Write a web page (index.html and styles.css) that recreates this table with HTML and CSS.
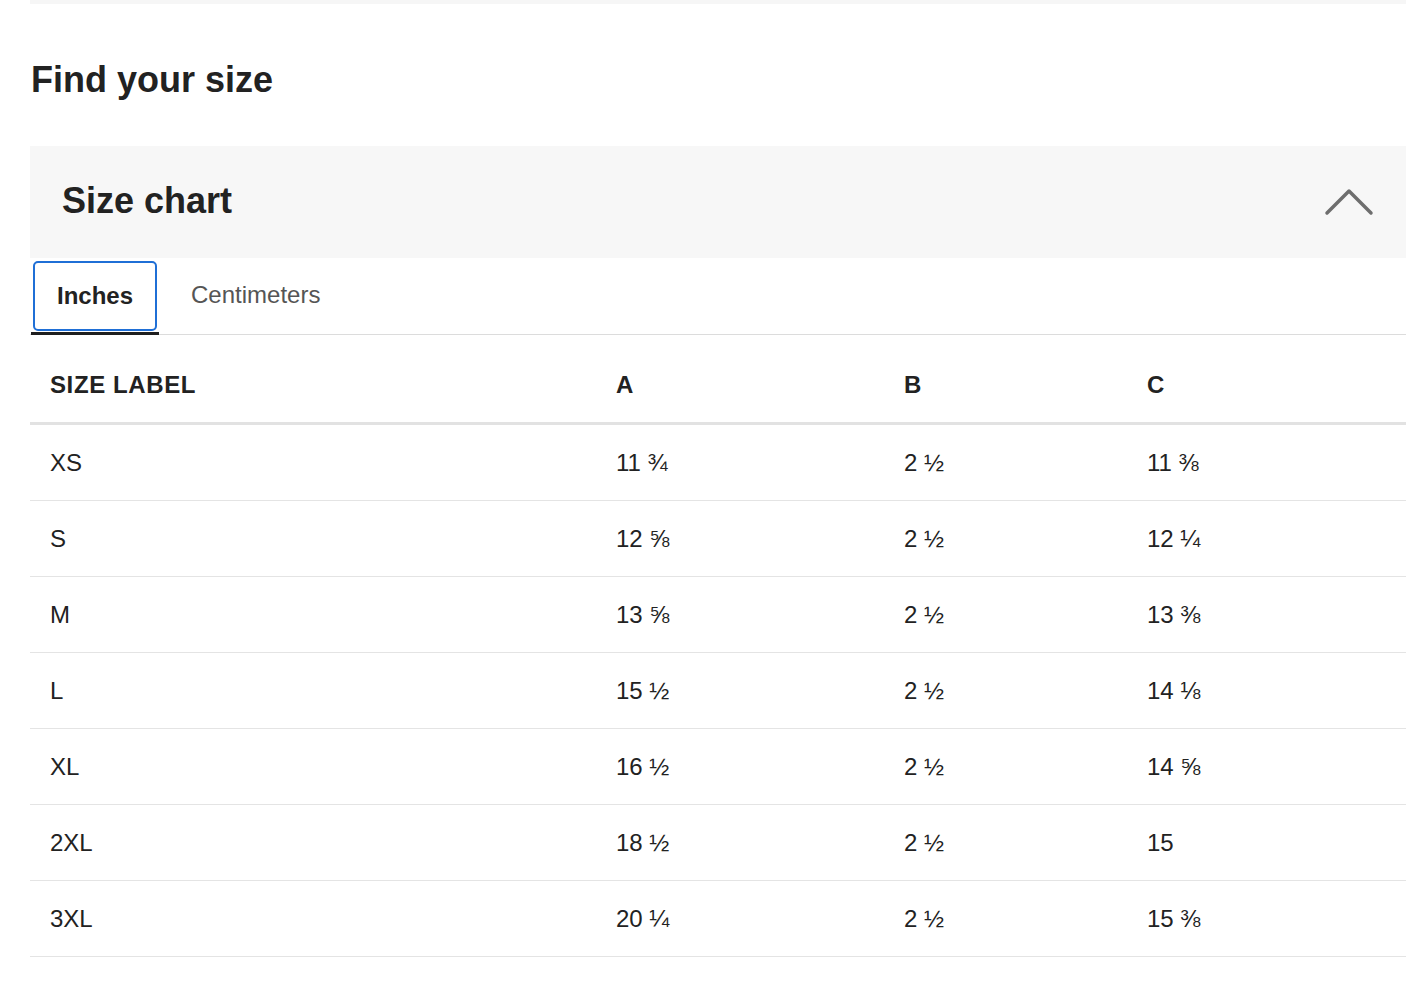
FILE: index.html
```html
<!DOCTYPE html>
<html lang="en">
<head>
<meta charset="utf-8">
<title>Find your size</title>
<link rel="stylesheet" href="styles.css">
</head>
<body>
<div class="page">
  <div class="top-strip"></div>
  <h2 class="title">Find your size</h2>
  <section class="chart">
    <div class="chart-head">
      <h3 class="chart-title">Size chart</h3>
      <svg class="chevron" width="50" height="28" viewBox="0 0 50 28" aria-hidden="true">
        <path d="M3 25 L25 3 L47 25" fill="none" stroke="#6e6e6e" stroke-width="3.5" stroke-linecap="round" stroke-linejoin="round"/>
      </svg>
    </div>
    <div class="tabs">
      <button class="tab tab-active">Inches</button>
      <button class="tab">Centimeters</button>
    </div>
    <table class="sizes">
      <colgroup>
        <col class="c1"><col class="c2"><col class="c3"><col class="c4">
      </colgroup>
      <thead>
        <tr><th>SIZE LABEL</th><th>A</th><th>B</th><th>C</th></tr>
      </thead>
      <tbody>
        <tr><td>XS</td><td>11 ¾</td><td>2 ½</td><td>11 ⅜</td></tr>
        <tr><td>S</td><td>12 ⅝</td><td>2 ½</td><td>12 ¼</td></tr>
        <tr><td>M</td><td>13 ⅝</td><td>2 ½</td><td>13 ⅜</td></tr>
        <tr><td>L</td><td>15 ½</td><td>2 ½</td><td>14 ⅛</td></tr>
        <tr><td>XL</td><td>16 ½</td><td>2 ½</td><td>14 ⅝</td></tr>
        <tr><td>2XL</td><td>18 ½</td><td>2 ½</td><td>15</td></tr>
        <tr><td>3XL</td><td>20 ¼</td><td>2 ½</td><td>15 ⅜</td></tr>
      </tbody>
    </table>
  </section>
</div>
</body>
</html>
```
FILE: styles.css
```css
* { box-sizing: border-box; }
html, body { margin: 0; padding: 0; background: #fff; }
body {
  font-family: "Liberation Sans", Arial, sans-serif;
  color: #222;
}
.page {
  margin-left: 30px;
  width: 1376px;
}
.top-strip {
  height: 4px;
  background: #f6f6f6;
}
.title {
  margin: 54px 0 44px 1px;
  font-size: 36px;
  line-height: 44px;
  font-weight: 700;
  color: #222;
}
.chart-head {
  height: 112px;
  background: #f7f7f7;
  display: flex;
  align-items: center;
  justify-content: space-between;
  padding: 0 32px 2px 32px;
}
.chart-title {
  margin: 0;
  font-size: 36px;
  line-height: 44px;
  font-weight: 700;
  color: #222;
}
.chevron {
  display: block;
  margin-top: 2px;
}
.tabs {
  display: flex;
  align-items: flex-start;
  gap: 8px;
  padding-top: 3px;
  border-bottom: 1px solid #dcdcdc;
}
.tab {
  font-family: inherit;
  font-size: 24px;
  line-height: 28px;
  background: none;
  border: 2px solid transparent;
  border-radius: 5px;
  padding: 18px 22px 20px 24px;
  margin: 0 0 3px 0;
  color: #555;
  position: relative;
}
.tab-active {
  font-weight: 700;
  color: #222;
  border-color: #1f6fd6;
  margin-left: 3px;
  padding: 19px 22px 19px 22px;
}
.tab-active::after {
  content: "";
  position: absolute;
  left: -4px;
  right: -4px;
  bottom: -6px;
  height: 3px;
  background: #1e1e1e;
  z-index: 1;
}
.sizes {
  width: 100%;
  border-collapse: collapse;
  table-layout: fixed;
}
.c1 { width: 566px; }
.c2 { width: 288px; }
.c3 { width: 243px; }
.c4 { width: 279px; }
.sizes th {
  text-align: left;
  font-size: 24px;
  line-height: 28px;
  font-weight: 700;
  letter-spacing: 0.6px;
  padding: 36px 20px 23px 20px;
  border-bottom: 3px solid #e2e2e2;
}
.sizes td {
  font-size: 24px;
  line-height: 28px;
  padding: 24px 20px 23px 20px;
  border-bottom: 1px solid #e4e4e4;
  color: #222;
}
```
